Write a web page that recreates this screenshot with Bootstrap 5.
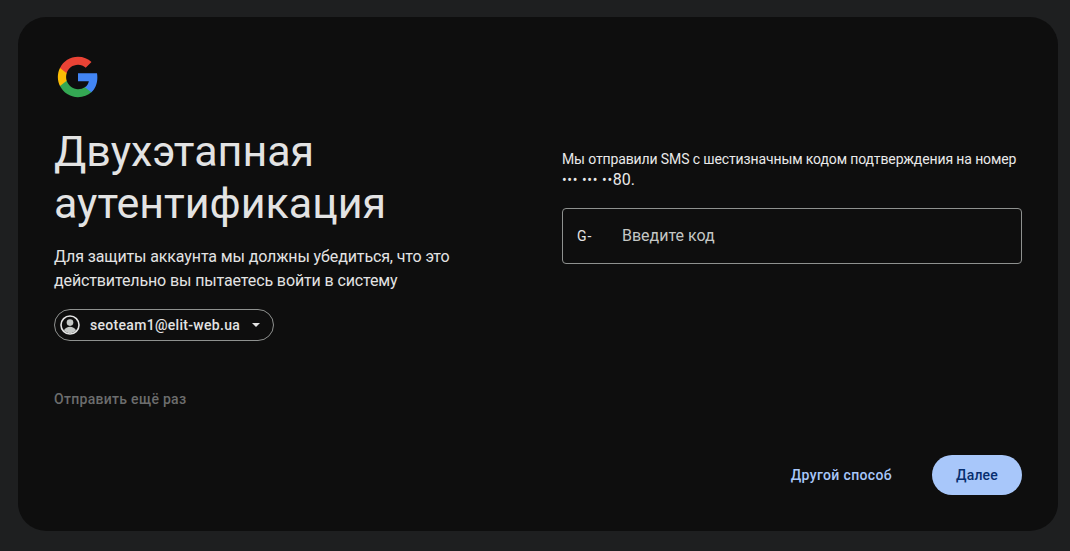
<!DOCTYPE html>
<html lang="ru">
<head>
<meta charset="utf-8">
<title>Двухэтапная аутентификация</title>
<link href="https://cdn.jsdelivr.net/npm/bootstrap@5.3.0/dist/css/bootstrap.min.css" rel="stylesheet">
<style>
html,body{height:100%}
body{background:#1e1f20;font-family:Roboto,"Liberation Sans",sans-serif;color:#e3e3e3;overflow:hidden}
.shell{width:1040px;height:514px;margin:17px 0 0 18px;background:#0e0e0e;border-radius:28px;padding:36px}
.main-cols{height:402px;gap:48px}
.side{width:460px;flex:none}
.glogo{display:block;width:44px;height:44px;margin:2px 0 26px 2px}
.ttl{font-family:Roboto,sans-serif;font-size:43px;line-height:52px;font-weight:400;color:#e3e3e3;margin:0 0 16px 0}
.sub{font-size:16px;line-height:24px;letter-spacing:-.12px;color:#e3e3e3;margin:0 0 16px}
.acct{height:32px;width:220px;border:1px solid #8e918f;border-radius:16px;padding:0 5px;font-size:14px;font-weight:500;letter-spacing:.3px;color:#e3e3e3}
.acct svg{flex:none;margin-right:10px}
.caret{width:0;height:0;border-left:4px solid transparent;border-right:4px solid transparent;border-top:4px solid #e3e3e3;margin-left:12px}
.resend{font-size:14px;font-weight:500;letter-spacing:.3px;color:#6c6d6d;margin-top:47px;line-height:20px}
.msg{font-size:14px;line-height:21px;letter-spacing:-.12px;color:#e9e9e9;margin:96px 0 17px}
.dots{letter-spacing:.6px}
.digits{font-size:16px;line-height:1;letter-spacing:0}
.codebox{height:56px;border:1px solid #8e918f;border-radius:4px;padding:0 14px;font-size:16px}
.pref{font-size:14px;width:45px;letter-spacing:1px;color:#e3e3e3}
.ph{color:#c4c7c5}
.foot{gap:40px}
.alt{font-size:14px;font-weight:500;letter-spacing:.35px;color:#a8c7fa}
.next{width:90px;height:40px;border-radius:20px;background:#a8c7fa;color:#062e6f;font-size:14px;font-weight:500;letter-spacing:.2px;border:0;padding:0}
.next:hover{background:#a8c7fa;color:#062e6f}
</style>
</head>
<body>
<div class="shell">
  <div class="d-flex main-cols">
    <div class="side">
      <svg class="glogo" viewBox="0 0 48 48" aria-label="Google">
        <path fill="#4285F4" d="M45.12 24.5c0-1.56-.14-3.06-.4-4.5H24v8.51h11.84c-.51 2.75-2.06 5.08-4.39 6.64v5.52h7.11c4.16-3.83 6.56-9.47 6.56-16.17z"/>
        <path fill="#34A853" d="M24 46c5.94 0 10.92-1.97 14.56-5.33l-7.11-5.52c-1.97 1.32-4.49 2.1-7.45 2.1-5.73 0-10.58-3.87-12.31-9.07H4.34v5.7C7.96 41.07 15.4 46 24 46z"/>
        <path fill="#FBBC05" d="M11.69 28.18C11.25 26.86 11 25.45 11 24s.25-2.86.69-4.18v-5.7H4.34C2.85 17.09 2 20.45 2 24c0 3.55.85 6.91 2.34 9.88l7.35-5.7z"/>
        <path fill="#EA4335" d="M24 10.75c3.23 0 6.13 1.11 8.41 3.29l6.31-6.31C34.91 4.18 29.93 2 24 2 15.4 2 7.96 6.93 4.34 14.12l7.35 5.7c1.73-5.2 6.58-9.07 12.31-9.07z"/>
      </svg>
      <h1 class="ttl">Двухэтапная аутентификация</h1>
      <p class="sub">Для защиты аккаунта мы должны убедиться, что это действительно вы пытаетесь войти в систему</p>
      <div class="acct d-inline-flex align-items-center">
        <svg width="20" height="20" viewBox="0 0 20 20"><circle cx="10" cy="10" r="9" fill="none" stroke="#e3e3e3" stroke-width="1.6"/><circle cx="10" cy="7.6" r="3.3" fill="#c4c7c5"/><path fill="#c4c7c5" d="M3.9 15.2c1.3-2.2 3.6-3.5 6.1-3.5s4.8 1.3 6.1 3.5c-1.5 1.8-3.7 2.9-6.1 2.9s-4.6-1.1-6.1-2.9z"/></svg>
        <span>seoteam1@elit-web.ua</span><span class="caret"></span>
      </div>
      <div class="resend">Отправить ещё раз</div>
    </div>
    <div class="side">
      <p class="msg">Мы отправили SMS с шестизначным кодом подтверждения на номер<br><span class="dots">••• ••• ••</span><span class="digits">80.</span></p>
      <div class="codebox d-flex align-items-center">
        <span class="pref">G-</span><span class="ph">Введите код</span>
      </div>
    </div>
  </div>
  <div class="d-flex justify-content-end align-items-center foot">
    <span class="alt">Другой способ</span>
    <button type="button" class="btn next">Далее</button>
  </div>
</div>
</body>
</html>
